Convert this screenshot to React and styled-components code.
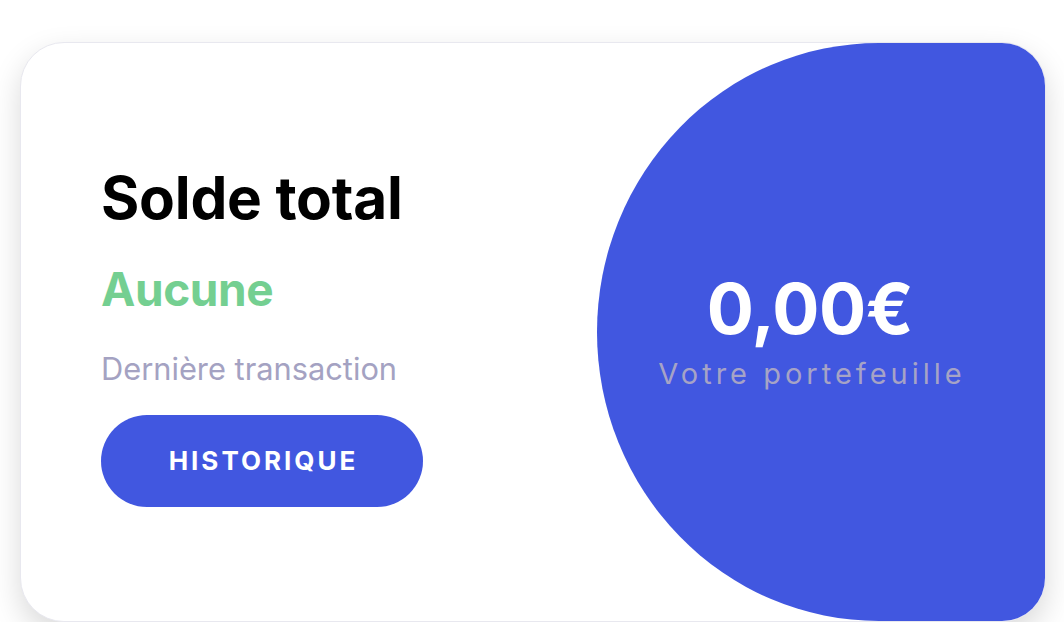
import styled, { createGlobalStyle } from "styled-components";

const GlobalStyle = createGlobalStyle`
  body {
    margin: 0;
    background: #ffffff;
    font-family: "Inter", "Liberation Sans", sans-serif;
  }
`

const Page = styled.div`
  padding: 42px 18px 0 20px;
`

const Card = styled.div`
  display: flex;
  width: 1026px;
  height: 580px;
  box-sizing: border-box;
  background: #ffffff;
  border: 1px solid #e8e8ef;
  border-radius: 44px;
  overflow: hidden;
  box-shadow: 0 12px 30px rgba(0, 0, 0, 0.15);
`

const Info = styled.div`
  flex: 1;
  display: flex;
  flex-direction: column;
  justify-content: center;
  align-items: flex-start;
  padding-left: 80px;
  padding-top: 6px;
`

const Title = styled.h2`
  margin: 0;
  font-size: 58.5px;
  font-weight: 700;
  letter-spacing: -0.2px;
  color: #000000;
  line-height: 1.2;
`

const LastAmount = styled.p`
  margin: 28px 0 0;
  font-size: 46px;
  font-weight: 700;
  letter-spacing: -0.4px;
  color: #74cf91;
  line-height: 1.2;
`

const Caption = styled.p`
  margin: 34px 0 0;
  font-size: 30.8px;
  font-weight: 400;
  color: #a4a2c2;
  line-height: 1.2;
`

const HistoryButton = styled.button`
  margin-top: 27px;
  width: 322px;
  height: 92px;
  border: none;
  border-radius: 46px;
  background: #4157e0;
  color: #ffffff;
  font-family: inherit;
  font-size: 26px;
  font-weight: 700;
  letter-spacing: 3px;
  text-indent: 3px;
  cursor: pointer;
`

const Wallet = styled.div`
  width: 448px;
  flex-shrink: 0;
  background: #4157e0;
  border-radius: 282px 0 0 282px / 50% 0 0 50%;
  display: flex;
  flex-direction: column;
  justify-content: center;
  align-items: center;
  padding-right: 22px;
  box-sizing: border-box;
`

const Balance = styled.div`
  font-size: 70px;
  font-weight: 700;
  color: #ffffff;
  line-height: 1;
  letter-spacing: -0.5px;
`

const WalletLabel = styled.div`
  margin-top: 12px;
  font-size: 29px;
  font-weight: 400;
  letter-spacing: 4px;
  text-indent: 4px;
  color: #a6a3c6;
`

const App = () => {
  return (
    <>
      <GlobalStyle />
      <Page>
        <Card>
          <Info>
            <Title>Solde total</Title>
            <LastAmount>Aucune</LastAmount>
            <Caption>Dernière transaction</Caption>
            <HistoryButton>HISTORIQUE</HistoryButton>
          </Info>
          <Wallet>
            <Balance>0,00€</Balance>
            <WalletLabel>Votre portefeuille</WalletLabel>
          </Wallet>
        </Card>
      </Page>
    </>
  )
}

export default App;
